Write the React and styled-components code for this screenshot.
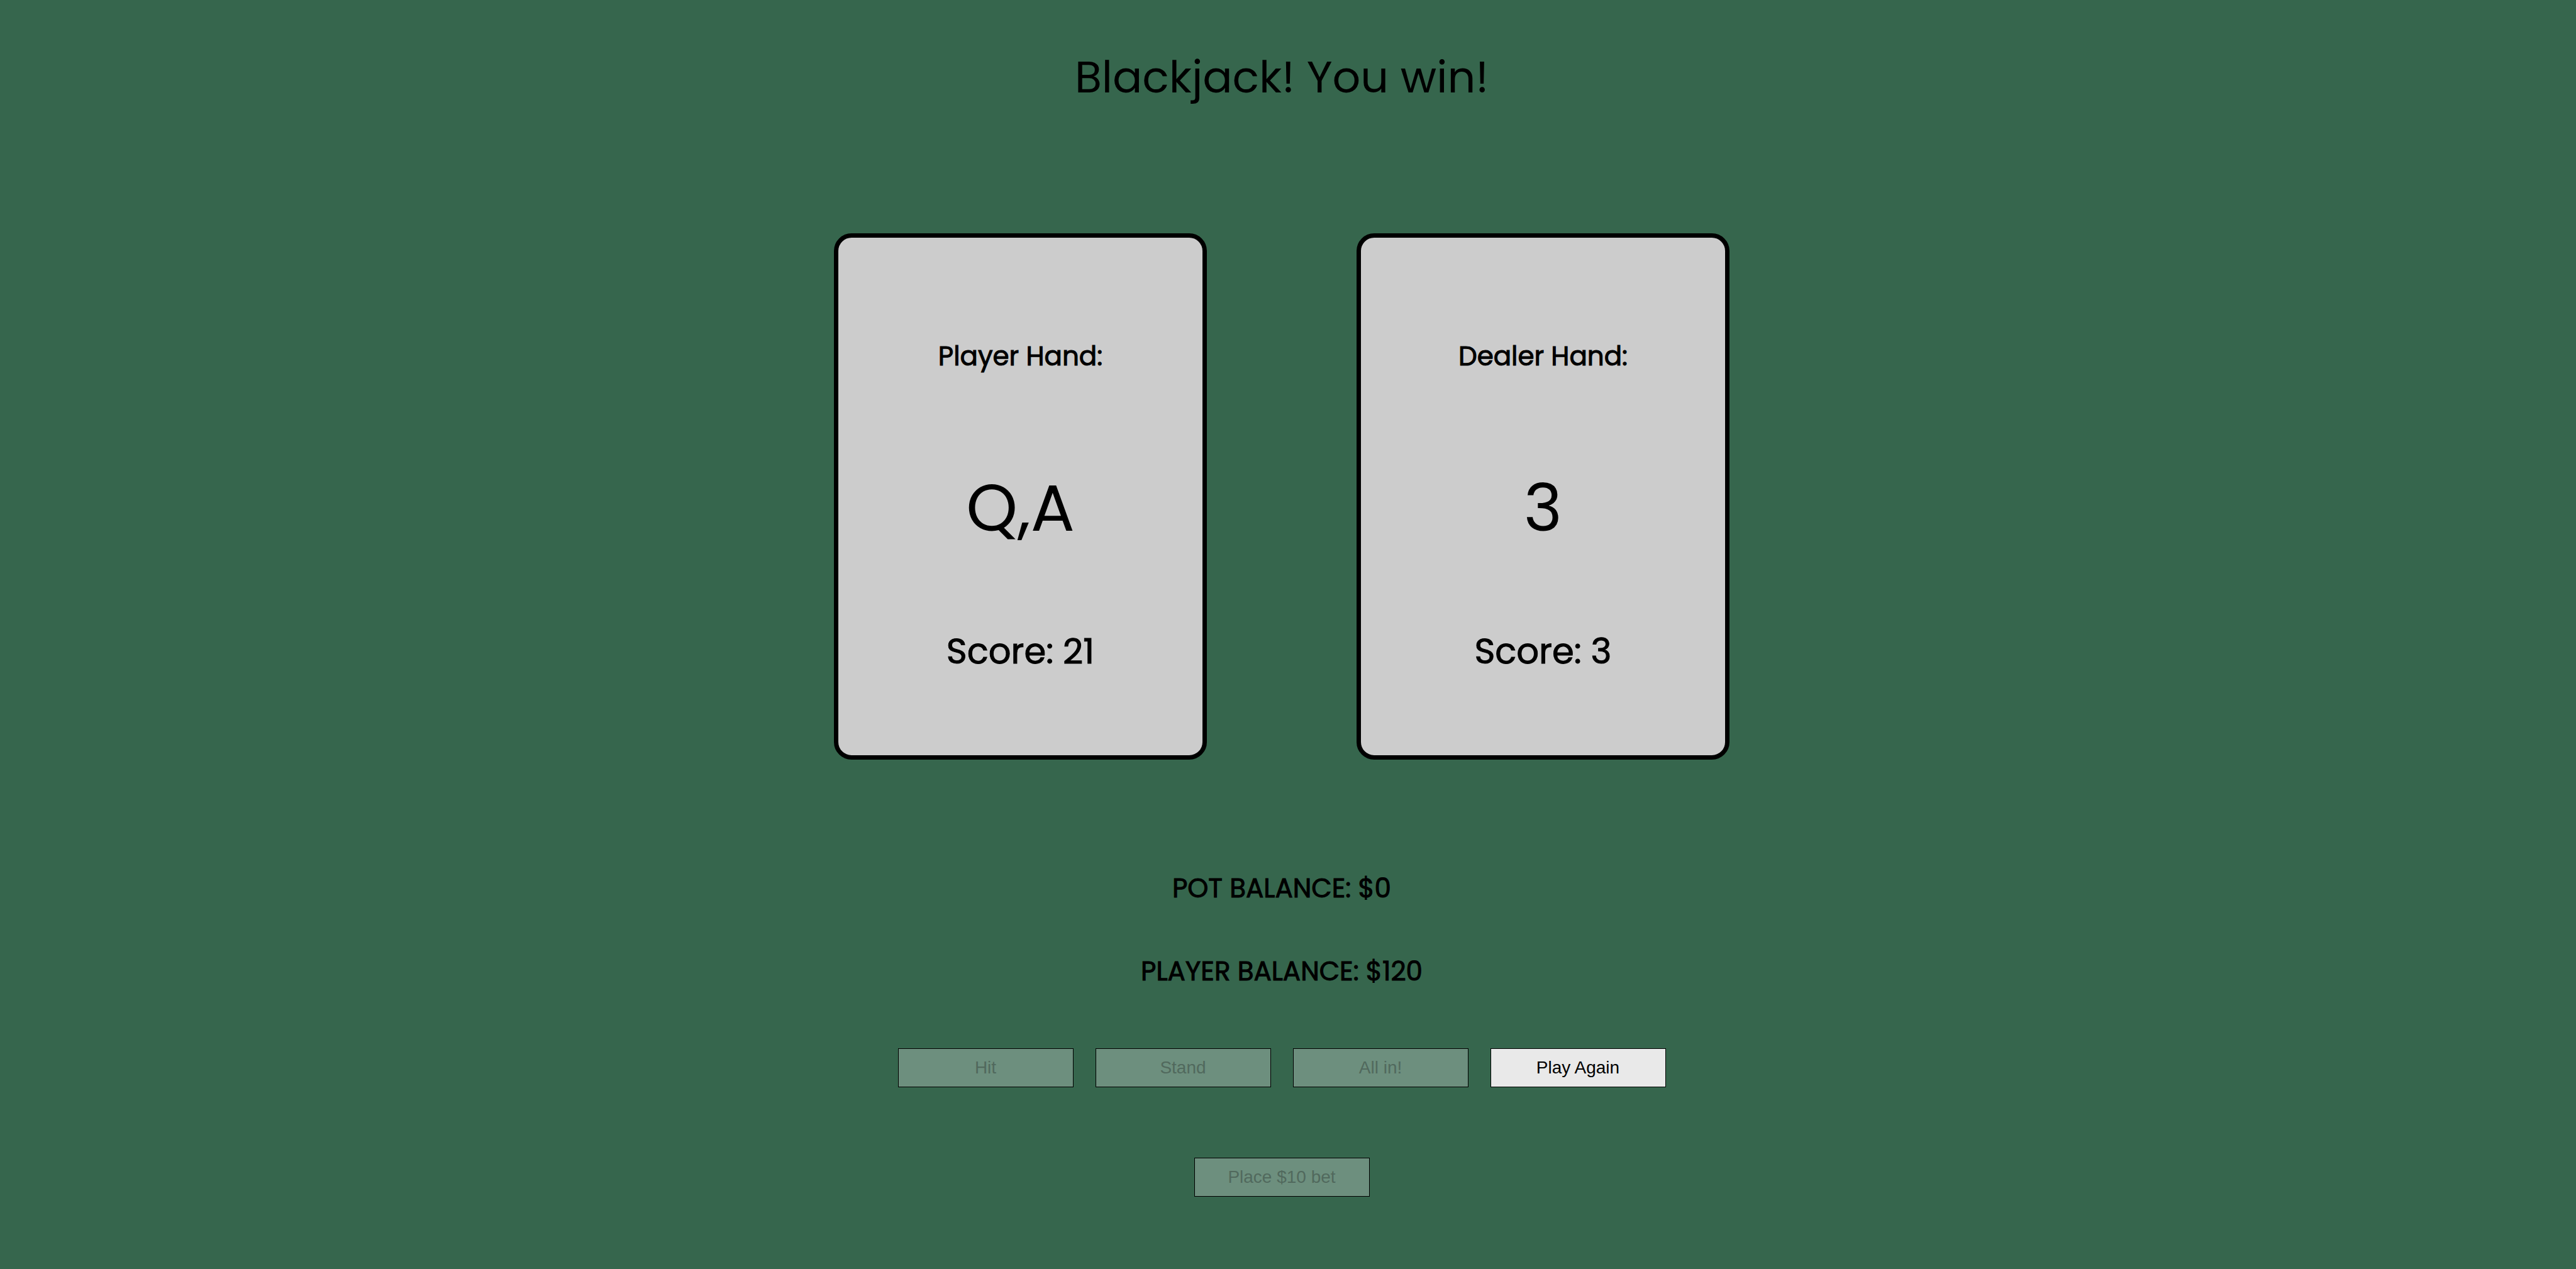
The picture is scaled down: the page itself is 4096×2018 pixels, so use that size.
import React from 'react';
import styled, { createGlobalStyle } from 'styled-components';

const GlobalStyle = createGlobalStyle`
  * {
    box-sizing: border-box;
  }

  body {
    margin: 0;
    background: #36664d;
    color: #000;
    font-family: Poppins, Inter, 'Open Sans', sans-serif;
  }

  h1, h2, p {
    margin: 0;
    font-weight: 400;
  }
`;

const Table = styled.main`
  display: flex;
  flex-direction: column;
  align-items: center;
  min-height: 100vh;
  padding: 63px 20px 63px 0;
`;

const Message = styled.h1`
  font-size: 70px;
  line-height: 120px;
  text-align: center;
`;

const Hands = styled.section`
  display: flex;
  flex-wrap: wrap;
  justify-content: center;
  gap: 64px 238px;
  margin-top: 188px;
`;

const Card = styled.article`
  display: flex;
  flex-direction: column;
  align-items: center;
  width: 593px;
  padding: 157px 24px 123px;
  border: 7px solid #000;
  border-radius: 28px;
  background: #ccc;
`;

const HandTitle = styled.h2`
  font-size: 42px;
  line-height: 64px;
  -webkit-text-stroke: 1px #000;
`;

const Cards = styled.p`
  margin: 131px 0 108px;
  font-size: 104px;
  line-height: 156px;
`;

const Score = styled.p`
  font-size: 56px;
  line-height: 84px;
  -webkit-text-stroke: 1px #000;
`;

const Balances = styled.section`
  display: flex;
  flex-direction: column;
  align-items: center;
  gap: 68px;
  margin-top: 173px;
`;

const Balance = styled.p`
  font-size: 42px;
  line-height: 64px;
  -webkit-text-stroke: 1px #000;
`;

const Actions = styled.div`
  display: flex;
  flex-wrap: wrap;
  justify-content: center;
  gap: 35px;
  margin-top: ${({ $gap }) => $gap}px;
`;

const ActionButton = styled.button`
  width: 279px;
  height: 62px;
  padding: 0;
  border: 1px solid #000;
  border-radius: 0;
  background: #e9e9e9;
  color: #000;
  font-family: Arial, 'Liberation Sans', sans-serif;
  font-size: 28px;
  cursor: pointer;

  &:disabled {
    background: #6d8f7e;
    color: #51695d;
    cursor: default;
  }
`;

function Hand({ title, cards, score }) {
  return (
    <Card>
      <HandTitle>{title}:</HandTitle>
      <Cards>{cards.join(',')}</Cards>
      <Score>Score: {score}</Score>
    </Card>
  );
}

export default function App() {
  return (
    <>
      <GlobalStyle />
      <Table>
        <Message>Blackjack! You win!</Message>
        <Hands>
          <Hand title="Player Hand" cards={['Q', 'A']} score={21} />
          <Hand title="Dealer Hand" cards={['3']} score={3} />
        </Hands>
        <Balances>
          <Balance>POT BALANCE: $0</Balance>
          <Balance>PLAYER BALANCE: $120</Balance>
        </Balances>
        <Actions $gap={90}>
          <ActionButton type="button" disabled>Hit</ActionButton>
          <ActionButton type="button" disabled>Stand</ActionButton>
          <ActionButton type="button" disabled>All in!</ActionButton>
          <ActionButton type="button">Play Again</ActionButton>
        </Actions>
        <Actions $gap={112}>
          <ActionButton type="button" disabled>Place $10 bet</ActionButton>
        </Actions>
      </Table>
    </>
  );
}
